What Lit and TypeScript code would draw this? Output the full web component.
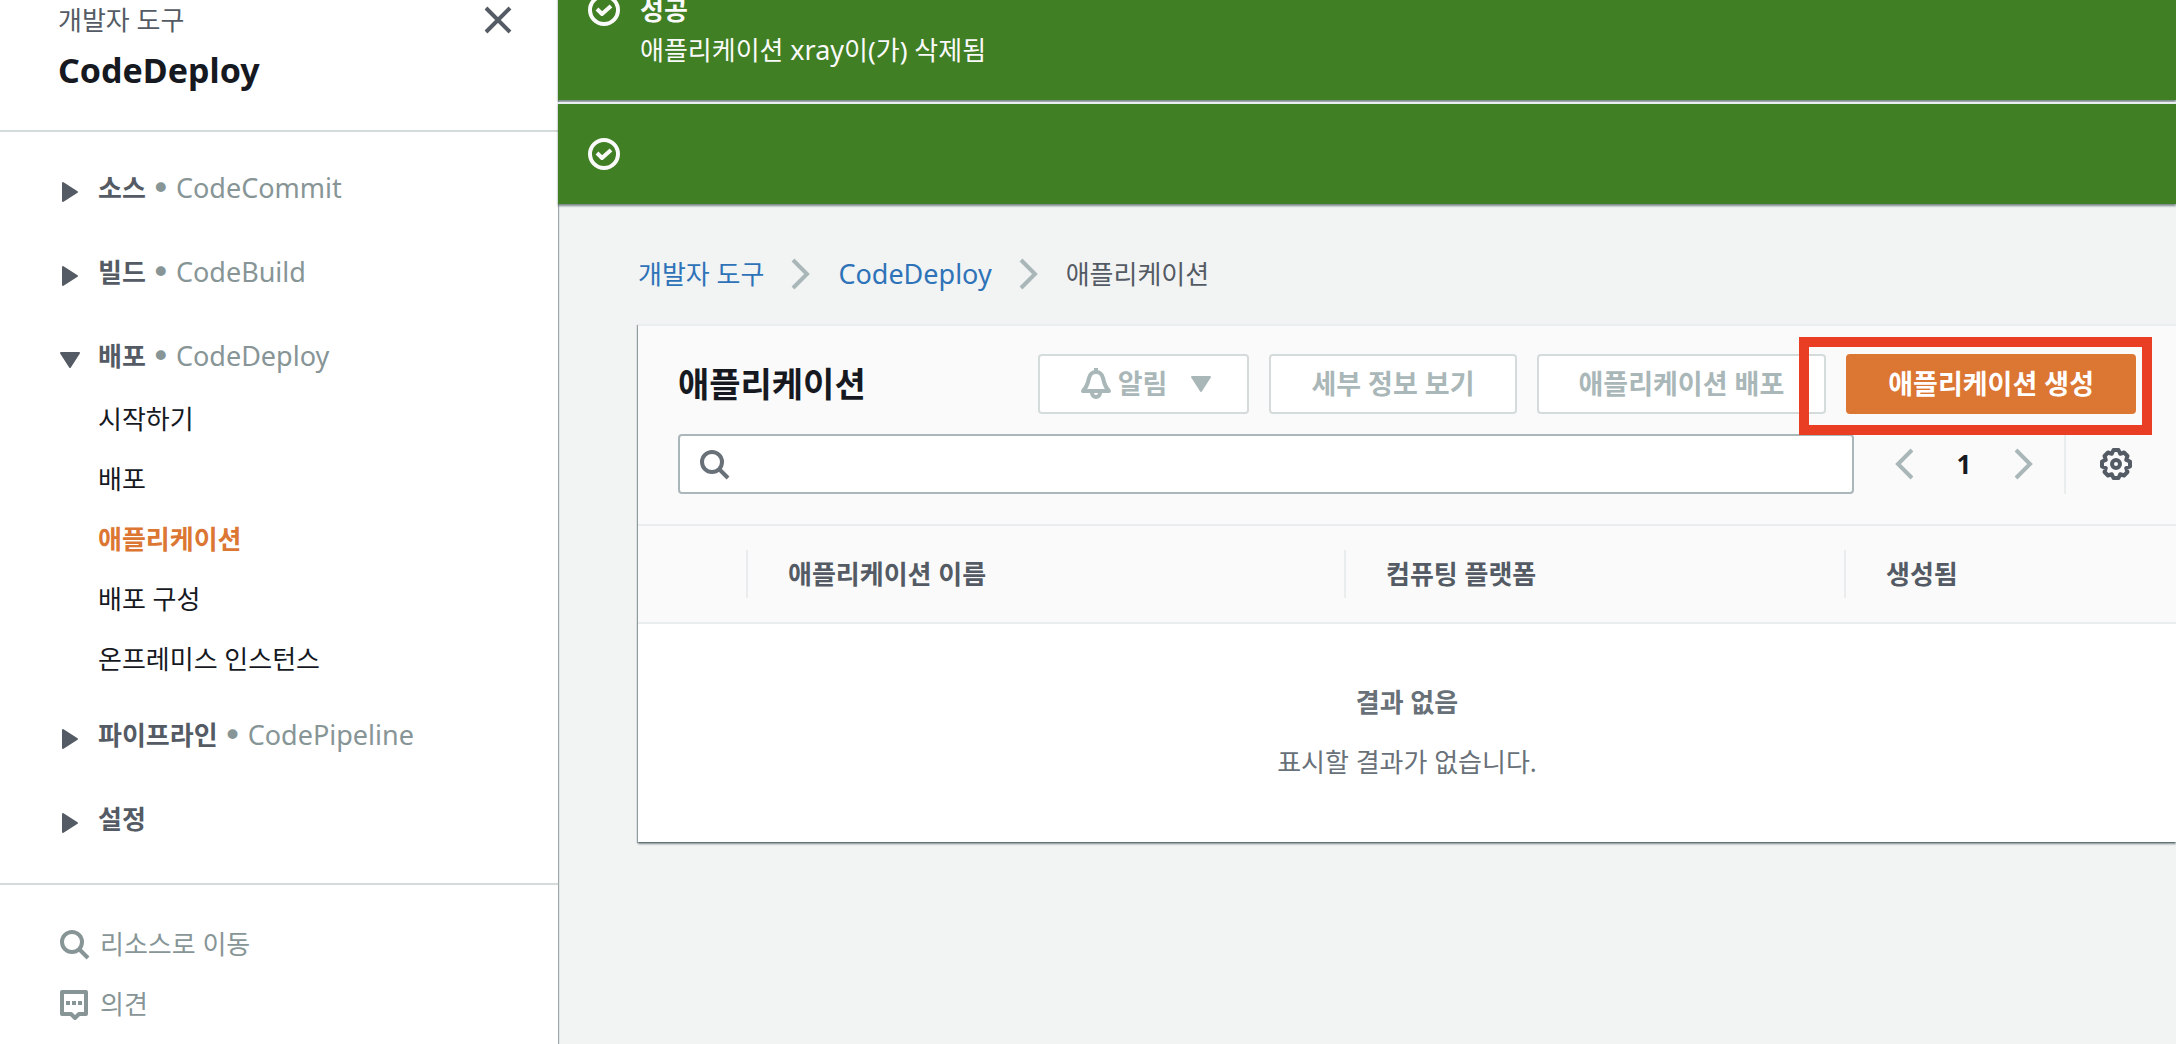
import { LitElement, html, css, svg, nothing } from "lit";
import { customElement, state } from "lit/decorators.js";

interface NavGroup {
  id: string;
  label: string;
  service?: string;
  items: string[];
}

const NAV: NavGroup[] = [
  { id: "source", label: "소스", service: "CodeCommit", items: [] },
  { id: "build", label: "빌드", service: "CodeBuild", items: [] },
  {
    id: "deploy",
    label: "배포",
    service: "CodeDeploy",
    items: ["시작하기", "배포", "애플리케이션", "배포 구성", "온프레미스 인스턴스"],
  },
  { id: "pipeline", label: "파이프라인", service: "CodePipeline", items: [] },
  { id: "settings", label: "설정", items: [] },
];

const searchIcon = svg`<svg class="icon" width="32" height="32" viewBox="0 0 32 32" fill="none" stroke="currentColor" stroke-width="4" aria-hidden="true">
  <circle cx="14" cy="14" r="10"></circle><path d="M21 21l9 9"></path></svg>`;

const feedbackIcon = svg`<svg class="icon" width="32" height="32" viewBox="0 0 32 32" aria-hidden="true">
  <path d="M4 4h24v22h-7l-4 4-4-4H4z" fill="none" stroke="currentColor" stroke-width="4" stroke-linejoin="round"></path>
  <path d="M8 13h4v4H8zM14 13h4v4h-4zM20 13h4v4h-4z" fill="currentColor"></path></svg>`;

const checkIcon = svg`<svg class="icon" width="32" height="32" viewBox="0 0 32 32" fill="none" stroke="currentColor" stroke-width="4" aria-hidden="true">
  <circle cx="16" cy="16" r="14"></circle><path d="M9 15l5 5 9-8" stroke-linejoin="round"></path></svg>`;

const chevron = (dir: "left" | "right") => svg`<svg class="icon" width="20" height="32" viewBox="0 0 20 32" fill="none" stroke="currentColor" stroke-width="4" aria-hidden="true">
  <path d=${dir === "left" ? "M18 2L4 16l14 14" : "M2 2l14 14L2 30"}></path></svg>`;

const caret = (open: boolean) => svg`<svg class="icon" width="20" height="24" viewBox="0 0 20 24" fill="currentColor" stroke="currentColor" stroke-width="2" stroke-linejoin="round" aria-hidden="true">
  <path d=${open ? "M1 5h18l-9 14z" : "M3 3v18l14-9z"}></path></svg>`;

const bellIcon = svg`<svg class="icon" width="32" height="32" viewBox="0 0 32 32" fill="none" stroke="currentColor" stroke-width="4" stroke-linejoin="round" aria-hidden="true">
  <path d="M3 23h26c-4-4-5-8-6-13-1-4-4-6-7-6s-6 2-7 6c-1 5-2 9-6 13z"></path><path d="M12 25a4 4 0 0 0 8 0M16 0v4"></path></svg>`;

const gearIcon = svg`<svg class="icon" width="32" height="32" viewBox="0 0 32 32" fill="none" stroke="currentColor" stroke-width="4" stroke-linejoin="round" aria-hidden="true">
  <path d="M13.5 2h5l1.7 3.8L24 4.5 27.5 8l-1.3 3.8 3.8 1.7v5l-3.8 1.7 1.3 3.8-3.5 3.5-3.8-1.3-1.7 3.8h-5l-1.7-3.8L8 27.500 4.500 24l1.300-3.800L2 18.500v-5l3.800-1.700L4.500 8 8 4.500l3.800 1.300z"></path><circle cx="16" cy="16" r="4"></circle></svg>`;

@customElement("app-root")
export class AppRoot extends LitElement {
  @state() private open = new Set<string>(["deploy"]);
  @state() private current = "애플리케이션";

  static styles = css`
    :host {
      display: block;
      font-family: "Noto Sans", "Noto Sans CJK KR", sans-serif;
      font-size: 26px;
      line-height: 36px;
      color: #16191f;
    }
    * { box-sizing: border-box; }
    button, input {
      font: inherit;
      color: inherit;
      background: none;
      border: 0;
      padding: 0;
      margin: 0;
    }
    button { cursor: pointer; }
    a { color: inherit; text-decoration: none; }
    ul, ol, h1, h2, p { margin: 0; padding: 0; list-style: none; }
    .icon { display: block; flex: none; }
    .latin { font-size: 27px; }

    .shell {
      display: grid;
      grid-template-columns: 558px minmax(0, 1fr);
      min-height: 100vh;
      background: #f2f3f3;
      overflow: hidden;
    }

    .sidebar {
      display: flex;
      flex-direction: column;
      background: #fff;
      box-shadow: 1px 0 1px 0 rgba(0, 28, 36, 0.35);
    }
    .side-head {
      display: flex;
      justify-content: space-between;
      align-items: flex-start;
      padding: 2px 44px 36px 58px;
      border-bottom: 2px solid #d5dbdb;
      color: #545b64;
    }
    .side-title {
      margin-top: 8px;
      font-size: 34px;
      line-height: 48px;
      font-weight: 700;
      color: #16191f;
    }
    .close { padding: 2px 0; }
    .nav {
      display: flex;
      flex-direction: column;
      gap: 48px;
      padding: 38px 58px 46px;
      border-bottom: 2px solid #d5dbdb;
    }
    .group.expanded { margin-bottom: -8px; }
    .group-head {
      display: flex;
      align-items: center;
      gap: 18px;
      padding-left: 2px;
      font-weight: 700;
      color: #545b64;
    }
    .group-head .icon { margin-top: 8px; }
    .group-label { display: flex; gap: 5px; align-items: center; }
    .dot {
      font-family: "DejaVu Sans", sans-serif;
      font-size: 34px;
      font-weight: 400;
      color: #879596;
    }
    .service { font-weight: 400; color: #879596; }
    .items {
      display: flex;
      flex-direction: column;
      gap: 24px;
      padding: 27px 0 0 40px;
    }
    .items a[aria-current] { color: #dc7633; font-weight: 700; }
    .tools {
      display: flex;
      flex-direction: column;
      gap: 24px;
      padding: 41px 58px 16px;
      color: #879596;
    }
    .tools a { display: flex; align-items: center; gap: 10px; }

    .main { min-width: 0; }
    .flashes {
      position: relative;
      z-index: 1;
      display: flex;
      flex-direction: column;
      gap: 2px;
      margin-top: -42px;
      color: #fafafa;
    }
    .flash {
      display: flex;
      gap: 20px;
      padding: 30px;
      border-top: 2px solid #eaeded;
      background: #407f23;
      line-height: 40px;
      box-shadow: 0 2px 2px 0 rgba(0, 28, 36, 0.5);
    }
    .flash .icon { margin: 4px 0; }
    .flash strong { display: block; }

    .content { padding: 50px 0 40px 80px; }
    .crumbs { display: flex; align-items: center; gap: 27px; color: #545b64; height: 40px; }
    .crumbs li { display: flex; align-items: center; gap: 27px; }
    .crumbs a { color: #2e73b8; }
    .crumbs .icon { color: #aab7b8; }

    .card {
      margin-top: 30px;
      background: #fff;
      border-top: 2px solid #eaeded;
      box-shadow: 0 2px 2px 0 rgba(0, 28, 36, 0.45), -1px 1px 1px 0 rgba(0, 28, 36, 0.3);
    }
    .card-head {
      display: flex;
      flex-direction: column;
      gap: 20px;
      padding: 28px 40px 30px;
      background: #fafafa;
    }
    .row { display: flex; align-items: center; justify-content: space-between; }
    h2 { font-size: 34px; line-height: 48px; font-weight: 700; }
    .actions { display: flex; gap: 20px; }
    .btn {
      display: flex;
      align-items: center;
      height: 60px;
      padding: 0 40px;
      border: 2px solid #d5dbdb;
      border-radius: 4px;
      background: #fff;
      color: #aab7b8;
      font-size: 27px;
      font-weight: 700;
      white-space: nowrap;
    }
    .btn.primary { background: #dc7633; border-color: #dc7633; color: #fff; }
    .btn.menu { gap: 6px; padding: 0 36px 0 40px; }
    .btn.menu .icon:last-child { margin-left: 18px; }
    .marked { position: relative; z-index: 2; }
    .marker {
      position: absolute;
      top: -17px;
      right: -16px;
      bottom: -21px;
      left: -47px;
      border: 10px solid #ea3e24;
      pointer-events: none;
    }

    .search {
      flex: 1;
      display: flex;
      align-items: center;
      gap: 12px;
      height: 60px;
      padding: 0 18px;
      border: 2px solid #aab7b8;
      border-radius: 4px;
      background: #fff;
      color: #687078;
    }
    .search input { flex: 1; min-width: 0; outline: none; height: 40px; color: #16191f; }
    .pager {
      display: flex;
      align-items: center;
      height: 60px;
      margin-left: 20px;
      padding-right: 10px;
      border-right: 2px solid #eaeded;
      color: #aab7b8;
    }
    .pager button { display: flex; justify-content: center; width: 60px; }
    .pager .page { color: #16191f; font-weight: 700; display: block; }
    .gear { margin-left: 34px; padding-right: 4px; color: #545b64; }

    table { width: 100%; border-collapse: collapse; table-layout: fixed; }
    .c-select { width: 108px; }
    .c-name { width: 598px; }
    .c-platform { width: 500px; }
    thead { background: #fafafa; }
    th {
      height: 98px;
      padding: 0;
      border-top: 2px solid #eaeded;
      border-bottom: 2px solid #eaeded;
      color: #545b64;
      text-align: left;
    }
    .th { display: block; padding-left: 40px; border-left: 2px solid #eaeded; line-height: 48px; }
    .empty {
      padding: 58px 40px 60px;
      text-align: center;
      line-height: 40px;
      color: #687078;
    }
    .empty p { margin-top: 20px; }
  `;

  private toggle(id: string) {
    const next = new Set(this.open);
    next.has(id) ? next.delete(id) : next.add(id);
    this.open = next;
  }

  private renderGroup(g: NavGroup) {
    const open = this.open.has(g.id);
    const listed = open && g.items.length > 0;
    return html`<li class="group ${listed ? "expanded" : ""}">
      <button class="group-head" aria-expanded=${open} @click=${() => this.toggle(g.id)}>
        ${caret(open)}
        <span class="group-label">
          <span>${g.label}</span>
          ${g.service
            ? html`<span class="dot">•</span><span class="service latin">${g.service}</span>`
            : nothing}
        </span>
      </button>
      ${listed
        ? html`<ul class="items">
            ${g.items.map(
              (item) => html`<li>
                <a href="#" aria-current=${item === this.current ? "page" : nothing}
                  @click=${() => (this.current = item)}>${item}</a>
              </li>`
            )}
          </ul>`
        : nothing}
    </li>`;
  }

  render() {
    return html`<div class="shell">
      <aside class="sidebar">
        <div class="side-head">
          <div>
            <p>개발자 도구</p>
            <h1 class="side-title">CodeDeploy</h1>
          </div>
          <button class="close" aria-label="닫기">
            <svg class="icon" width="32" height="32" viewBox="0 0 32 32" fill="none" stroke="currentColor" stroke-width="4" aria-hidden="true">
              <path d="M4 4l24 24M28 4L4 28"></path>
            </svg>
          </button>
        </div>
        <ul class="nav">${NAV.map((g) => this.renderGroup(g))}</ul>
        <div class="tools">
          <a href="#">${searchIcon}<span>리소스로 이동</span></a>
          <a href="#">${feedbackIcon}<span>의견</span></a>
        </div>
      </aside>

      <main class="main">
        <div class="flashes">
          <div class="flash" role="status">
            ${checkIcon}
            <div><strong>성공</strong>애플리케이션 <span class="latin">xray</span>이(가) 삭제됨</div>
          </div>
          <div class="flash" role="status">${checkIcon}<div>&nbsp;</div></div>
        </div>

        <div class="content">
          <ol class="crumbs">
            <li><a href="#">개발자 도구</a>${chevron("right")}</li>
            <li><a href="#" class="latin">CodeDeploy</a>${chevron("right")}</li>
            <li>애플리케이션</li>
          </ol>

          <section class="card">
            <div class="card-head">
              <div class="row">
                <h2>애플리케이션</h2>
                <div class="actions">
                  <button class="btn menu" disabled>${bellIcon}<span>알림</span>
                    <svg class="icon" width="20" height="16" viewBox="0 0 20 16" fill="currentColor" stroke="currentColor" stroke-width="2" stroke-linejoin="round" aria-hidden="true">
                      <path d="M1 1h18l-9 14z"></path>
                    </svg>
                  </button>
                  <button class="btn" disabled>세부 정보 보기</button>
                  <button class="btn" disabled>애플리케이션 배포</button>
                  <div class="marked">
                    <button class="btn primary">애플리케이션 생성</button>
                    <div class="marker"></div>
                  </div>
                </div>
              </div>
              <div class="row">
                <label class="search">${searchIcon}<input type="text" aria-label="애플리케이션 검색" /></label>
                <div class="pager">
                  <button aria-label="이전 페이지" disabled>${chevron("left")}</button>
                  <button class="page">1</button>
                  <button aria-label="다음 페이지" disabled>${chevron("right")}</button>
                </div>
                <button class="gear" aria-label="기본 설정">${gearIcon}</button>
              </div>
            </div>
            <table>
              <colgroup>
                <col class="c-select" /><col class="c-name" /><col class="c-platform" /><col />
              </colgroup>
              <thead>
                <tr>
                  <th></th>
                  <th><span class="th">애플리케이션 이름</span></th>
                  <th><span class="th">컴퓨팅 플랫폼</span></th>
                  <th><span class="th">생성됨</span></th>
                </tr>
              </thead>
              <tbody>
                <tr>
                  <td class="empty" colspan="4">
                    <strong>결과 없음</strong>
                    <p>표시할 결과가 없습니다.</p>
                  </td>
                </tr>
              </tbody>
            </table>
          </section>
        </div>
      </main>
    </div>`;
  }
}
